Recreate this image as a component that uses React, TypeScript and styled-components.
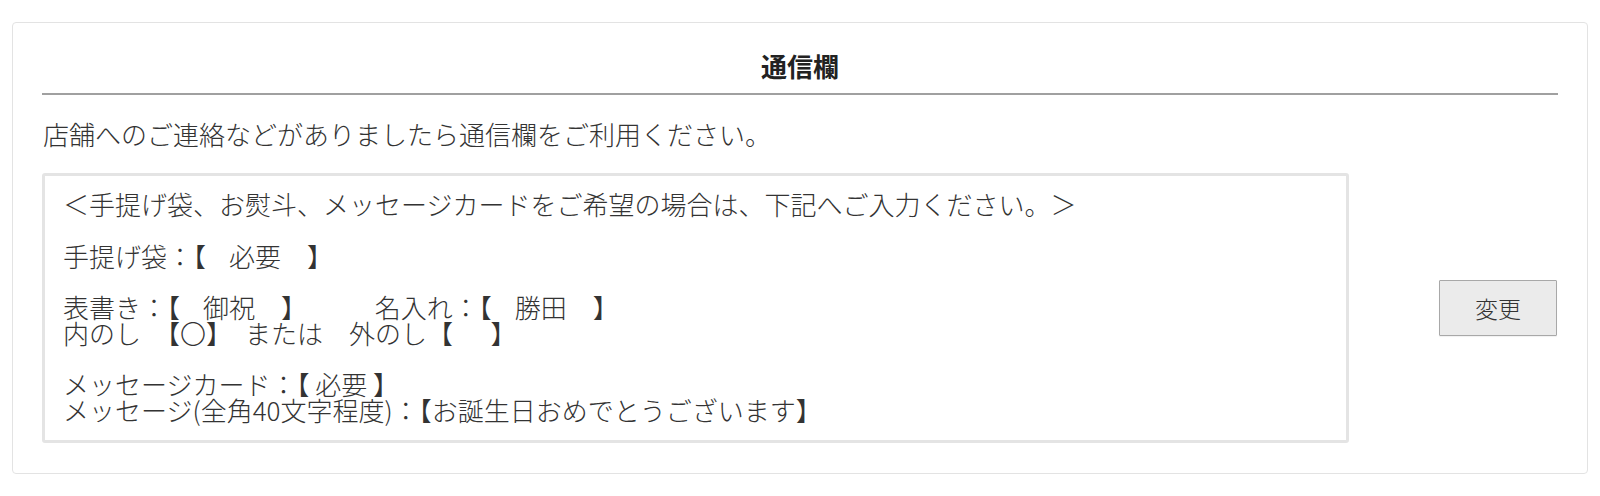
import styled, { createGlobalStyle } from 'styled-components';

const GlobalStyle = createGlobalStyle`
  html, body {
    margin: 0;
    padding: 0;
    background: #ffffff;
  }
  body {
    font-family: "Noto Sans CJK JP", "Noto Sans", sans-serif;
    color: #333333;
  }
`;

const Page = styled.div`
  padding: 22px 12px 0;
`;

const Card = styled.section`
  border: 1px solid #e3e3e3;
  border-radius: 4px;
  padding: 30px 29px 30px;
`;

const Title = styled.h2`
  margin: 0;
  padding-bottom: 14px;
  border-bottom: 2px solid #a0a0a0;
  text-align: center;
  font-size: 26px;
  line-height: 26px;
  font-weight: 700;
  color: #222222;
`;

const Lead = styled.p`
  margin: 26px 0 26px 1px;
  font-size: 26px;
  line-height: 26px;
  font-weight: 300;
  color: #333333;
`;

const Row = styled.div`
  display: flex;
  align-items: center;
  justify-content: space-between;
`;

const Message = styled.textarea`
  box-sizing: border-box;
  width: 1307px;
  height: 270px;
  margin: 0;
  padding: 15px 18px 14px;
  border: 3px solid #e4e4e4;
  border-radius: 3px;
  background: #ffffff;
  font-family: "Noto Sans CJK JP", "Noto Sans", sans-serif;
  font-size: 26px;
  line-height: 25.75px;
  font-weight: 300;
  color: #333333;
  resize: none;
  overflow: hidden;
  outline: none;
  white-space: pre-wrap;
`;

const ChangeButton = styled.button`
  box-sizing: border-box;
  width: 118px;
  height: 56px;
  margin: 0 1px 0 0;
  padding: 0;
  border: 1px solid #a8a8a8;
  border-radius: 1px;
  background: #ebebeb;
  box-shadow: 0 1px 1px rgba(0, 0, 0, 0.06);
  font-family: "Noto Sans CJK JP", "Noto Sans", sans-serif;
  font-size: 23px;
  font-weight: 300;
  color: #333333;
  cursor: pointer;
`;

const messageText = [
  '＜手提げ袋、お熨斗、メッセージカードをご希望の場合は、下記へご入力ください。＞',
  '',
  '手提げ袋：【    必要　】',
  '',
  '表書き：【    御祝　】　　     名入れ：【    勝田　】',
  '内のし　【〇】　または　外のし【　  】',
  '',
  'メッセージカード：【 必要 】',
  'メッセージ(全角40文字程度)：【お誕生日おめでとうございます】',
].join('\n');

export default function App() {
  return (
    <>
      <GlobalStyle />
      <Page>
        <Card>
          <Title>通信欄</Title>
          <Lead>店舗へのご連絡などがありましたら通信欄をご利用ください。</Lead>
          <Row>
            <Message value={messageText} readOnly />
            <ChangeButton type="button">変更</ChangeButton>
          </Row>
        </Card>
      </Page>
    </>
  );
}
